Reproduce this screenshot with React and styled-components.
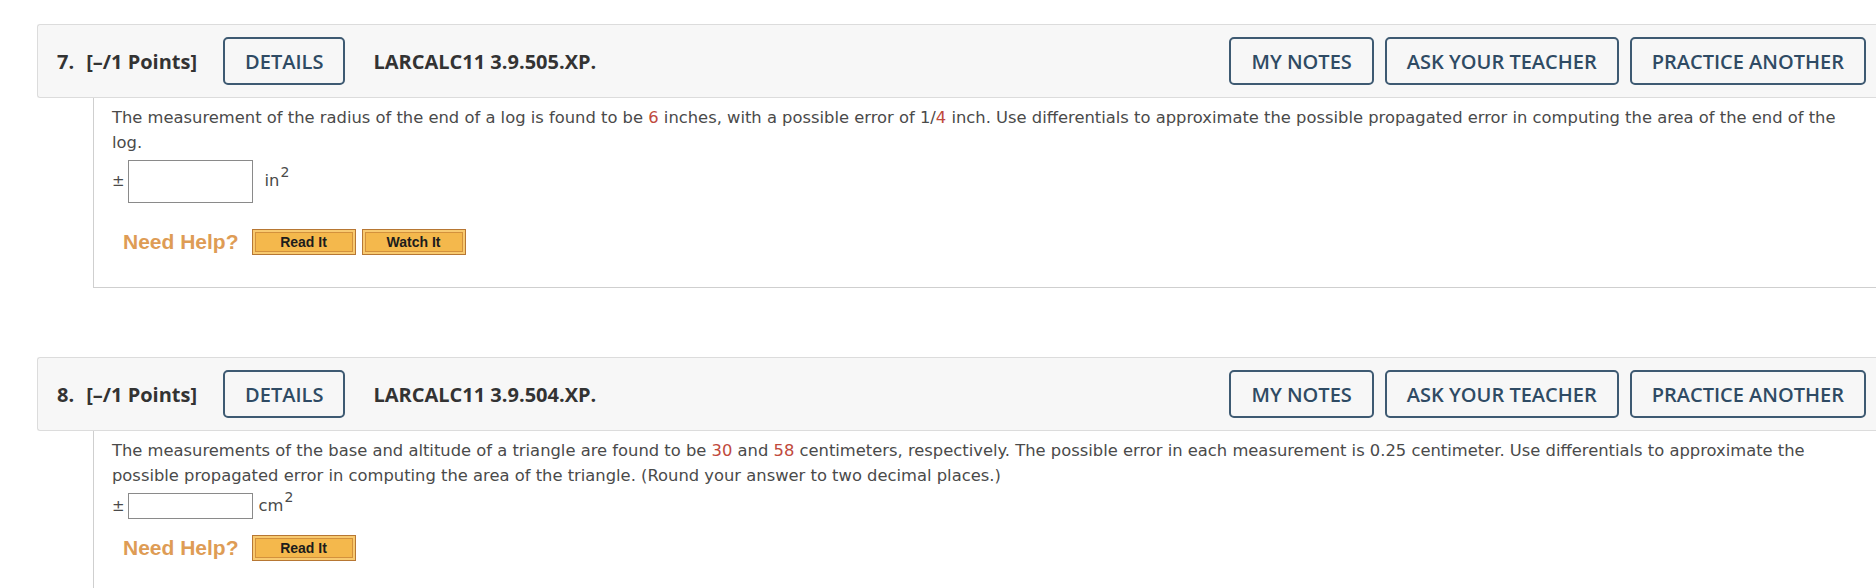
import React from 'react';
import styled, { createGlobalStyle } from 'styled-components';

const GlobalStyle = createGlobalStyle`
  body {
    margin: 0;
    background: #fff;
    overflow: hidden;
  }
`;

const Page = styled.div`
  padding: 24px 0 0 37px;
  display: flex;
  flex-direction: column;
  gap: 69px;
`;

const Header = styled.div`
  height: 74px;
  box-sizing: border-box;
  display: flex;
  align-items: center;
  background: #f7f7f7;
  border: 1px solid #dcdcdc;
  border-right: none;
  border-radius: 3px 0 0 3px;
  padding: 0 10px 0 19px;
  font-family: "Open Sans", sans-serif;
  font-size: 20px;
  color: #333;
`;

const Number = styled.span`
  font-weight: 700;
  margin-right: 12px;
`;

const Points = styled.span`
  font-weight: 700;
  margin-right: 26px;
`;

const Code = styled.span`
  font-weight: 700;
  margin-left: 28px;
  flex: 1;
`;

const Actions = styled.div`
  display: flex;
  gap: 11px;
`;

const HeaderButton = styled.button`
  height: 48px;
  box-sizing: border-box;
  padding: 0 20px;
  border: 2px solid #3e5a72;
  border-radius: 5px;
  background: transparent;
  font-family: "Open Sans", sans-serif;
  font-size: 20px;
  font-weight: 600;
  color: #2f4b64;
  white-space: nowrap;
`;

const Body = styled.div`
  margin-left: 56px;
  border-left: 1px solid #cfcfcf;
  border-bottom: ${p => (p.$open ? 'none' : '1px solid #cfcfcf')};
  padding: 8px 20px ${p => p.$bottom}px 18px;
  font-family: "DejaVu Sans", Verdana, sans-serif;
  font-size: 16.35px;
  line-height: 24.5px;
  color: #4a4a4a;
`;

const Red = styled.span`
  color: #c0493c;
`;

const AnswerRow = styled.div`
  display: flex;
  align-items: center;
  margin-top: ${p => p.$top}px;
`;

const PlusMinus = styled.span`
  font-size: 15px;
  margin-right: 3px;
`;

const Input = styled.div`
  width: 125px;
  height: ${p => p.$h}px;
  box-sizing: border-box;
  border: 1px solid #8a8a8a;
  background: #fff;
  margin-right: ${p => p.$gap}px;
`;

const Unit = styled.span`
  sup {
    font-size: 14px;
    line-height: 0;
    vertical-align: 9px;
    margin-left: 1px;
  }
`;

const HelpRow = styled.div`
  display: flex;
  align-items: center;
  gap: 6px;
  margin: ${p => p.$top}px 0 0 11px;
`;

const NeedHelp = styled.span`
  font-family: "Liberation Sans", Arial, sans-serif;
  font-weight: 700;
  font-size: 21px;
  color: #de9c55;
  margin-right: 7px;
`;

const HelpButton = styled.button`
  width: 104px;
  height: 26px;
  box-sizing: border-box;
  padding: 0;
  border: 1px solid #b77733;
  background: #f4b84c;
  box-shadow: inset 0 0 0 2px #f8ca70, inset 0 0 0 3px #d3913c;
  font-family: "Liberation Sans", Arial, sans-serif;
  font-weight: 700;
  font-size: 14px;
  color: #1c1c1c;
`;

const questions = [
  {
    num: '7.',
    code: 'LARCALC11 3.9.505.XP.',
    text: (
      <>
        The measurement of the radius of the end of a log is found to be <Red>6</Red> inches,
        with a possible error of 1/<Red>4</Red> inch. Use differentials to approximate the
        possible propagated error in computing the area of the end of the log.
      </>
    ),
    unit: 'in',
    inputH: 43,
    unitGap: 12,
    answerTop: 5,
    helpTop: 26,
    help: ['Read It', 'Watch It'],
    bottom: 32,
  },
  {
    num: '8.',
    code: 'LARCALC11 3.9.504.XP.',
    text: (
      <>
        The measurements of the base and altitude of a triangle are found to be <Red>30</Red> and{' '}
        <Red>58</Red> centimeters, respectively. The possible error in each measurement is 0.25
        centimeter. Use differentials to approximate the possible propagated error in computing
        the area of the triangle. (Round your answer to two decimal places.)
      </>
    ),
    unit: 'cm',
    inputH: 26,
    unitGap: 6,
    answerTop: 5,
    helpTop: 16,
    help: ['Read It'],
    bottom: 40,
    open: true,
  },
];

function Question({ q }) {
  return (
    <div>
      <Header>
        <Number>{q.num}</Number>
        <Points>[–/1 Points]</Points>
        <HeaderButton>DETAILS</HeaderButton>
        <Code>{q.code}</Code>
        <Actions>
          <HeaderButton>MY NOTES</HeaderButton>
          <HeaderButton>ASK YOUR TEACHER</HeaderButton>
          <HeaderButton>PRACTICE ANOTHER</HeaderButton>
        </Actions>
      </Header>
      <Body $bottom={q.bottom} $open={q.open}>
        <div>{q.text}</div>
        <AnswerRow $top={q.answerTop}>
          <PlusMinus>±</PlusMinus>
          <Input $h={q.inputH} $gap={q.unitGap} />
          <Unit>
            {q.unit}
            <sup>2</sup>
          </Unit>
        </AnswerRow>
        <HelpRow $top={q.helpTop}>
          <NeedHelp>Need Help?</NeedHelp>
          {q.help.map(h => (
            <HelpButton key={h}>{h}</HelpButton>
          ))}
        </HelpRow>
      </Body>
    </div>
  );
}

export default function App() {
  return (
    <>
      <GlobalStyle />
      <Page>
        {questions.map(q => (
          <Question key={q.num} q={q} />
        ))}
      </Page>
    </>
  );
}
